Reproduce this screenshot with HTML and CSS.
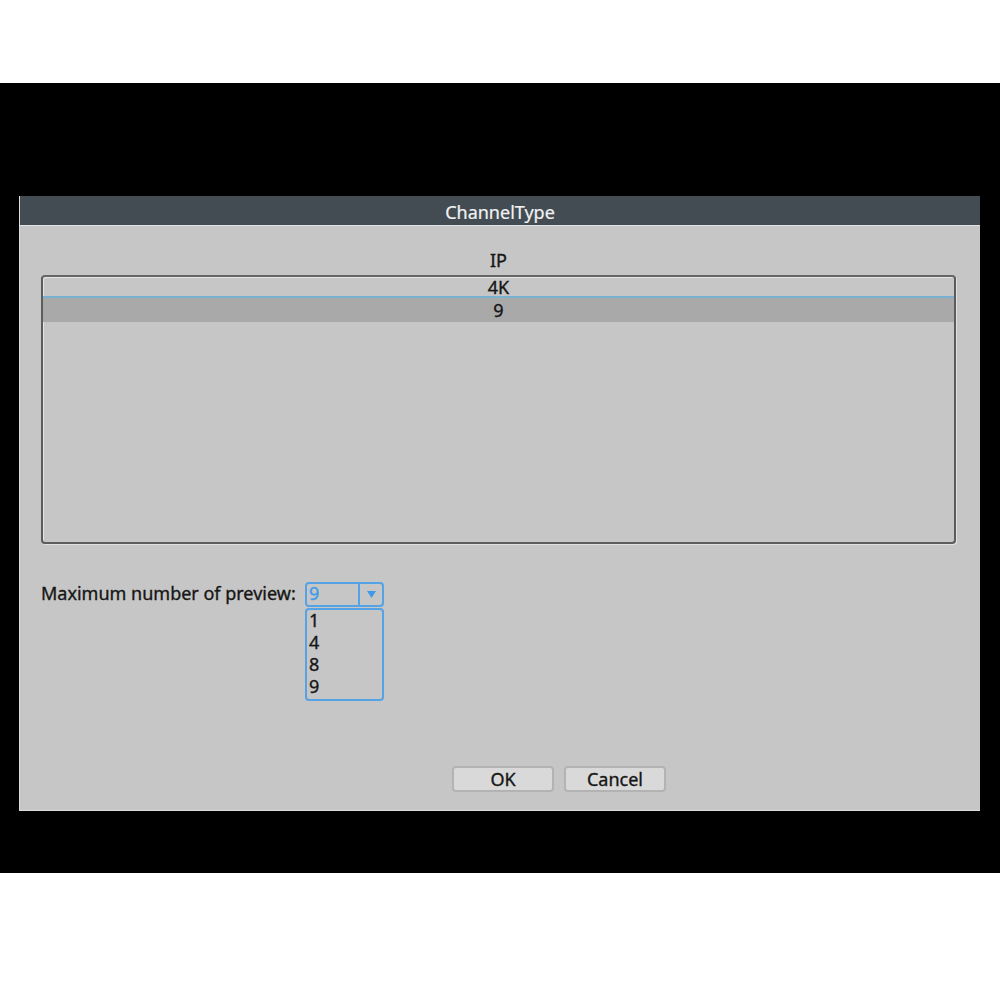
FILE: index.html
```html
<!DOCTYPE html>
<html>
<head>
<meta charset="utf-8">
<link rel="stylesheet" href="styles.css">
</head>
<body>
<div class="screen">
  <div class="dialog">
    <div class="titlebar">ChannelType</div>
    <div class="body">
      <div class="col-head">IP</div>
      <div class="listbox">
        <div class="row row-first">4K</div>
        <div class="row row-sel">9</div>
      </div>
      <div class="field">
        <span class="label">Maximum number of preview:</span>
        <div class="combo">
          <div class="select">
            <span class="select-val">9</span>
            <span class="select-btn"><svg width="9" height="7" viewBox="0 0 9 7"><path d="M0 0H9L4.5 7Z" fill="#3d9be9"/></svg></span>
          </div>
          <div class="options">
            <div class="opt">1</div>
            <div class="opt">4</div>
            <div class="opt">8</div>
            <div class="opt">9</div>
          </div>
        </div>
      </div>
      <div class="buttons">
        <div class="btn btn-ok">OK</div>
        <div class="btn btn-cancel">Cancel</div>
      </div>
    </div>
  </div>
</div>
</body>
</html>
```
FILE: styles.css
```css
* { box-sizing: border-box; }
html, body { margin: 0; padding: 0; background: #ffffff; }
body {
  font-family: "Noto Sans", "Open Sans", sans-serif;
  color: #161616;
  -webkit-text-stroke: 0.35px currentColor;
}

.screen {
  margin-top: 83px;
  height: 790px;
  background: #000;
  padding-top: 113px;
  padding-left: 19px;
}

.dialog {
  width: 961px;
  height: 615px;
  background: #c6c6c6;
  border-left: 1px solid #dcdcdc;
  border-bottom: 1px solid #dcdcdc;
  display: flex;
  flex-direction: column;
}

.titlebar {
  height: 30px;
  background: #444c53;
  border-bottom: 1px solid #e2e2e2;
  color: #f2f2f2;
  font-size: 18px;
  text-align: center;
  line-height: 33px;
  -webkit-text-stroke: 0.2px currentColor;
}

.body {
  flex: 1;
  position: relative;
  padding-left: 21px;
  padding-right: 23px;
}

.col-head {
  text-align: center;
  font-size: 18px;
  height: 49px;
  line-height: 20px;
  padding-top: 24px;
  width: 915px;
}

.listbox {
  width: 915px;
  height: 269px;
  border: 2px solid #5c5c5c;
  border-top-color: #666;
  border-radius: 4px;
  box-shadow: inset 1px 1px 0 #e6e6e6, 1px 1px 0 #e0e0e0;
  overflow: hidden;
}

.row {
  text-align: center;
  font-size: 18px;
}
.row-first {
  height: 21px;
  line-height: 20px;
  border-bottom: 2px solid #7ab0d2;
}
.row-sel {
  height: 24px;
  line-height: 24px;
  background: #a9a9a9;
}

.field {
  display: flex;
  align-items: flex-start;
  margin-top: 38px;
}

.label {
  font-size: 18px;
  line-height: 20px;
  margin-top: 1px;
  width: 264px;
}

.combo {
  display: flex;
  flex-direction: column;
  width: 79px;
}

.select {
  height: 25px;
  border: 2px solid #55a2e4;
  border-radius: 4px;
  display: flex;
}
.select-val {
  flex: 1;
  color: #3d9be9;
  font-size: 18px;
  line-height: 19px;
  padding-left: 2px;
}
.select-btn {
  width: 24px;
  border-left: 2px solid #55a2e4;
  display: flex;
  align-items: center;
  justify-content: center;
  padding-bottom: 1px;
}

.options {
  margin-top: 1px;
  height: 93px;
  border: 2px solid #55a2e4;
  border-radius: 4px;
  padding-top: 0;
}
.opt {
  font-size: 18px;
  line-height: 21px;
  height: 22px;
  padding-left: 2px;
}

.buttons {
  display: flex;
  gap: 10px;
  position: absolute;
  left: 432px;
  top: 540px;
}
.btn {
  height: 26px;
  border: 2px solid #b3b3b3;
  border-radius: 4px;
  background: #d9d9d9;
  text-align: center;
  font-size: 18px;
  line-height: 22px;
}
.btn-ok { width: 102px; }
.btn-cancel { width: 102px; }
```
